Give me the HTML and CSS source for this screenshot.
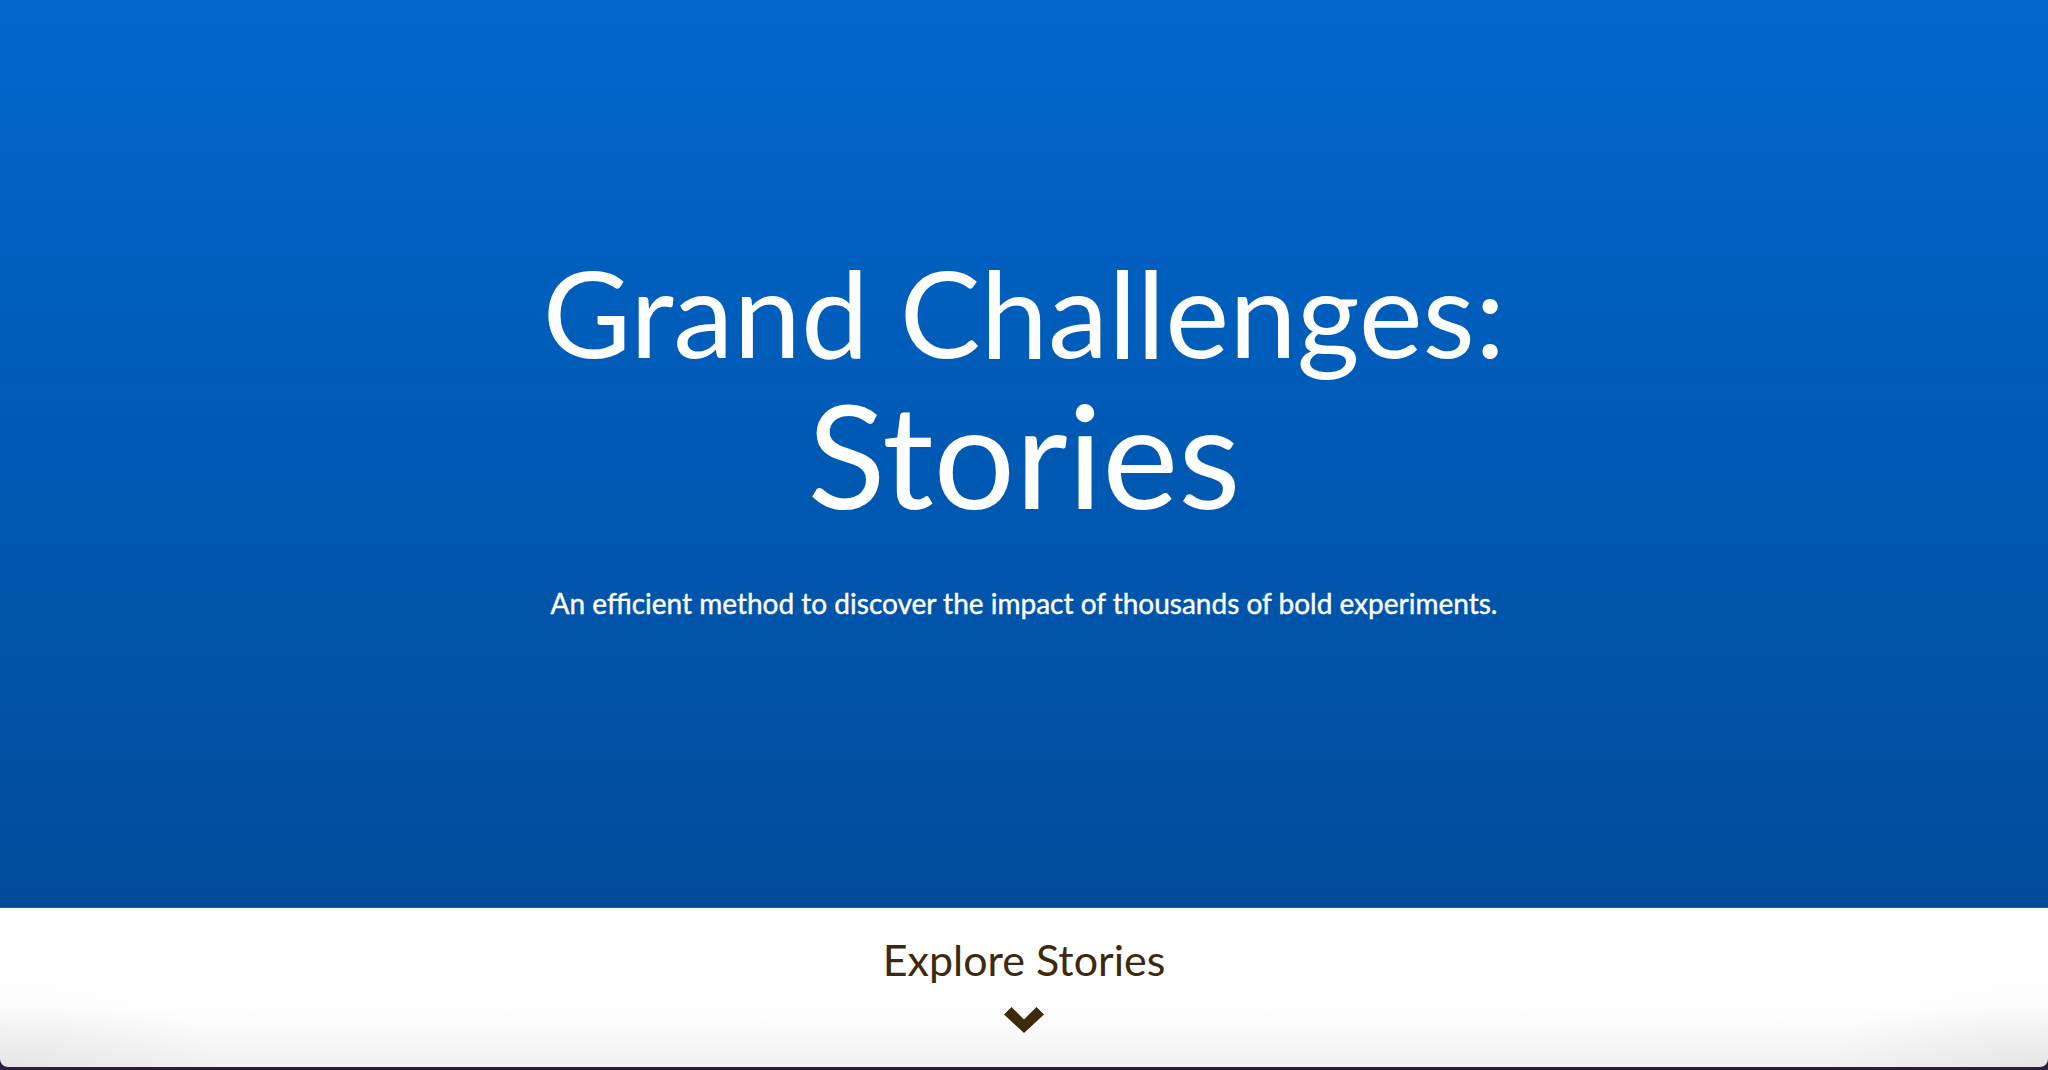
FILE: index.html
```html
<!DOCTYPE html>
<html lang="en">
<head>
<meta charset="utf-8">
<title>Grand Challenges: Stories</title>
<link rel="stylesheet" href="styles.css">
</head>
<body>
<div class="page">
  <header class="hero">
    <h1 class="hero-title"><span class="title-line1">Grand Challenges:</span><span class="title-line2">Stories</span></h1>
    <p class="hero-sub">An efficient method to discover the impact of thousands of bold experiments.</p>
  </header>
  <section class="explore">
    <div class="explore-label">Explore Stories</div>
    <svg class="chevron" width="40" height="26" viewBox="0 0 40 26" aria-hidden="true">
      <path d="M0 7.5 L7.5 0 L20 12.5 L32.5 0 L40 7.5 L20 26 Z" fill="#3d2a0c"/>
    </svg>
  </section>
</div>
</body>
</html>
```
FILE: styles.css
```css
html, body {
  margin: 0;
  padding: 0;
  height: 100%;
}
body {
  background: #2a1c45;
  font-family: Lato, "Open Sans", sans-serif;
  overflow: hidden;
}
.page {
  height: 1067px;
  display: flex;
  flex-direction: column;
}
.hero {
  height: 908px;
  flex-shrink: 0;
  box-sizing: border-box;
  background: linear-gradient(to bottom, #0067cd 0%, #004c9a 100%);
  border-bottom: 1px solid #1a5ea6;
  display: flex;
  flex-direction: column;
  align-items: center;
  padding-top: 239px;
  color: #fff;
}
.hero-title {
  margin: 0;
  font-weight: 400;
  text-align: center;
}
.title-line1 {
  display: block;
  font-size: 121px;
  line-height: 145px;
}
.title-line2 {
  display: block;
  font-size: 144px;
  line-height: 139px;
}
.hero-sub {
  margin: 63px 0 0;
  font-size: 28px;
  line-height: 34px;
  -webkit-text-stroke: 0.4px #fff;
}
.explore {
  flex: 1;
  background:
    radial-gradient(ellipse 220px 90px at 0 100%, rgba(0,0,0,0.05), rgba(0,0,0,0)),
    radial-gradient(ellipse 220px 90px at 100% 100%, rgba(0,0,0,0.05), rgba(0,0,0,0)),
    linear-gradient(to bottom, #ffffff 0%, #ffffff 62%, #f1f1f1 100%);
  border-radius: 0 0 8px 8px;
  display: flex;
  flex-direction: column;
  align-items: center;
  padding-top: 24px;
}
.explore-label {
  font-size: 43px;
  line-height: 56px;
  color: #3d2a0c;
}
.chevron {
  margin-top: 19px;
}
```
